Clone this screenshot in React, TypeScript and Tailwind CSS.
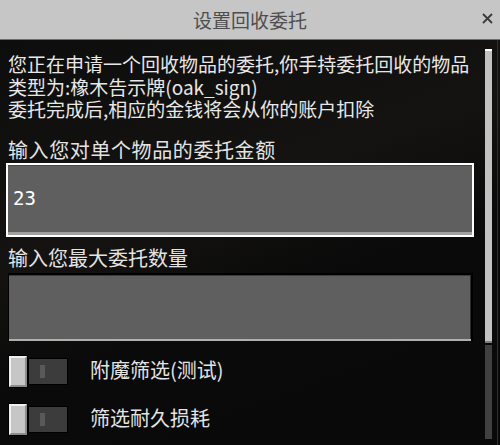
import React, { useState } from "react";

const FONT = "font-['Noto_Sans_CJK_SC','Noto_Sans',sans-serif]";

const Toggle: React.FC<{ on: boolean; onClick: () => void }> = ({ on, onClick }) => {
  return (
    <button type="button" onClick={onClick} className="flex items-center h-[33px] w-[60px]">
      {/* knob */}
      <div className="h-[33px] w-[20px] bg-black p-px">
        <div className="h-full w-full bg-[#c6c6c6] border-t-2 border-l-2 border-t-[#f0f0f0] border-l-[#f0f0f0] border-b-2 border-r-2 border-b-[#8b8b8b] border-r-[#8b8b8b]" />
      </div>
      {/* track */}
      <div className="h-[27px] w-[40px] bg-[#3c3c3c] border border-black flex items-center pl-[11px]">
        <div className={on ? "h-[13px] w-[5px] bg-[#7a7a7a]" : "h-[13px] w-[5px] bg-[#595959]"} />
      </div>
    </button>
  );
};

const App: React.FC = () => {
  const [amount, setAmount] = useState<string>("23");
  const [count, setCount] = useState<string>("");
  const [enchant, setEnchant] = useState<boolean>(false);
  const [durability, setDurability] = useState<boolean>(false);

  return (
    <div className={`w-[500px] h-[445px] overflow-hidden flex flex-col bg-[#0b0b0b] ${FONT}`}>
      {/* title bar */}
      <div className="relative h-[40px] shrink-0 bg-[#c6c6c6] border-b border-b-[#6e6e6e] flex items-center justify-center">
        <span className="text-[19px] leading-none text-[#4e4e4e] pb-[1px]">设置回收委托</span>
        <button type="button" className="absolute right-[7px] top-[13px]">
          <svg width="11" height="11" viewBox="0 0 11 11">
            <path d="M1 1 L10 10 M10 1 L1 10" stroke="#3a3a3a" strokeWidth="1.8" />
          </svg>
        </button>
      </div>

      <div className="flex flex-1 bg-[linear-gradient(160deg,#0d0d0d_0%,#141311_40%,#0a0a0a_60%,#090909_100%)]">
        {/* main content */}
        <div className="flex-1 flex flex-col">
          <div className="pl-[8px] pt-[13px] text-[19px] leading-[22.5px] text-[#e8e8e8] whitespace-nowrap">
            <div>您正在申请一个回收物品的委托,你手持委托回收的物品</div>
            <div>类型为:橡木告示牌(oak_sign)</div>
            <div>委托完成后,相应的金钱将会从你的账户扣除</div>
          </div>

          <div className="pl-[8px] mt-[17px] text-[20px] leading-[24px] tracking-[0.6px] text-[#e4e4e4]">
            输入您对单个物品的委托金额
          </div>
          <div className="ml-[6px] mt-px w-[468px] h-[74px] border-2 border-white flex flex-col">
            <div className="flex-1 bg-[#5f5f5f] border-t border-t-[#474747] flex items-center px-[5px]">
              <input
                value={amount}
                onChange={(e) => setAmount(e.target.value)}
                className="w-full bg-transparent outline-none text-white text-[19px] font-['DejaVu_Sans_Mono',monospace]"
              />
            </div>
            <div className="h-[3px] bg-[#a0a0a0]" />
          </div>

          <div className="pl-[8px] mt-[9px] text-[20px] leading-[24px] text-[#e4e4e4]">
            输入您最大委托数量
          </div>
          <div className="ml-[8px] mt-[3px] w-[465px] h-[68px] border-t-2 border-l border-r-2 border-black flex flex-col">
            <div className="flex-1 bg-[#5f5f5f] border-t border-t-[#3c3c3c] border-r border-r-[#2c2c2c] flex items-center px-[5px]">
              <input
                value={count}
                onChange={(e) => setCount(e.target.value)}
                className="w-full bg-transparent outline-none text-white text-[19px] font-['DejaVu_Sans_Mono',monospace]"
              />
            </div>
            <div className="h-[2px] bg-[#b0b0b0]" />
          </div>

          <div className="mt-[14px] pl-[8px] flex flex-col gap-[15px]">
            <div className="flex items-center gap-[22px]">
              <Toggle on={enchant} onClick={() => setEnchant(!enchant)} />
              <span className="text-[20px] leading-none text-[#e4e4e4] pb-[2px]">附魔筛选(测试)</span>
            </div>
            <div className="flex items-center gap-[22px]">
              <Toggle on={durability} onClick={() => setDurability(!durability)} />
              <span className="text-[20px] leading-none text-[#e4e4e4] pb-[2px]">筛选耐久损耗</span>
            </div>
          </div>
        </div>

        {/* scrollbar */}
        <div className="w-[7px] mt-[9px] mb-[6px] flex flex-col gap-[2px]">
          <div className="h-[294px] bg-[#c2c2c2] border-t-2 border-t-white border-b-2 border-b-[#7c7c7c]" />
          <div className="flex-1 bg-[#404040]" />
        </div>
        <div className="w-[8px] flex justify-end pr-[2px]">
          <div className="w-px h-full bg-[#2e2e2e]" />
        </div>
      </div>
    </div>
  );
};

export default App;
